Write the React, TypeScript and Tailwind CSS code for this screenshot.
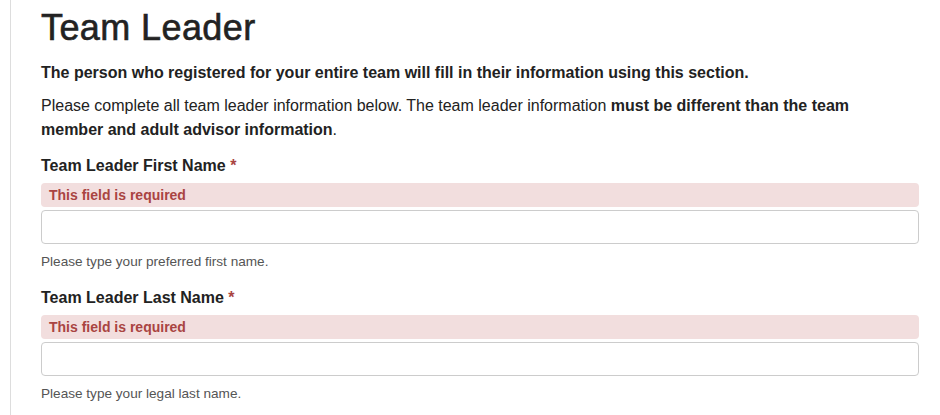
import React from "react";

function Field({ label, help }: { label: string; help: string }) {
  return (
    <div className="flex flex-col">
      <label className="text-[16px] leading-[24px] font-bold text-[#222]">
        {label} <span className="text-[#a94442]">*</span>
      </label>
      <div className="mt-[5px] h-[24px] rounded-[4px] bg-[#f2dede] px-[8px] text-[14px] leading-[24px] font-bold text-[#a94442]">
        This field is required
      </div>
      <input
        type="text"
        className="mt-[3px] h-[34px] w-full rounded-[4px] border border-[#ccc] bg-white px-3 outline-none"
      />
      <p className="mt-[8px] text-[13.6px] leading-[20px] text-[#555]">{help}</p>
    </div>
  );
}

export default function App() {
  return (
    <div
      className="min-h-[415px] w-[940px] bg-white pl-[10px] pr-[21px]"
      style={{ fontFamily: '"Liberation Sans", Arial, sans-serif' }}
    >
      <div className="min-h-[415px] border-l border-[#ddd] pl-[30px] pt-[8px]">
        <h1 className="text-[36px] leading-[40px] font-normal tracking-[0.4px] text-[#222] [-webkit-text-stroke:0.6px_#222]">
          Team Leader
        </h1>
        <p className="mt-[13px] text-[16px] leading-[24px] font-bold text-[#222]">
          The person who registered for your entire team will fill in their information using this section.
        </p>
        <p className="mt-[9px] pr-[20px] text-[16px] leading-[24px] text-[#222]">
          Please complete all team leader information below. The team leader information{" "}
          <b>must be different than the team member and adult advisor information</b>.
        </p>
        <div className="mt-[12px] flex flex-col gap-[14px]">
          <Field label="Team Leader First Name" help="Please type your preferred first name." />
          <Field label="Team Leader Last Name" help="Please type your legal last name." />
        </div>
      </div>
    </div>
  );
}
